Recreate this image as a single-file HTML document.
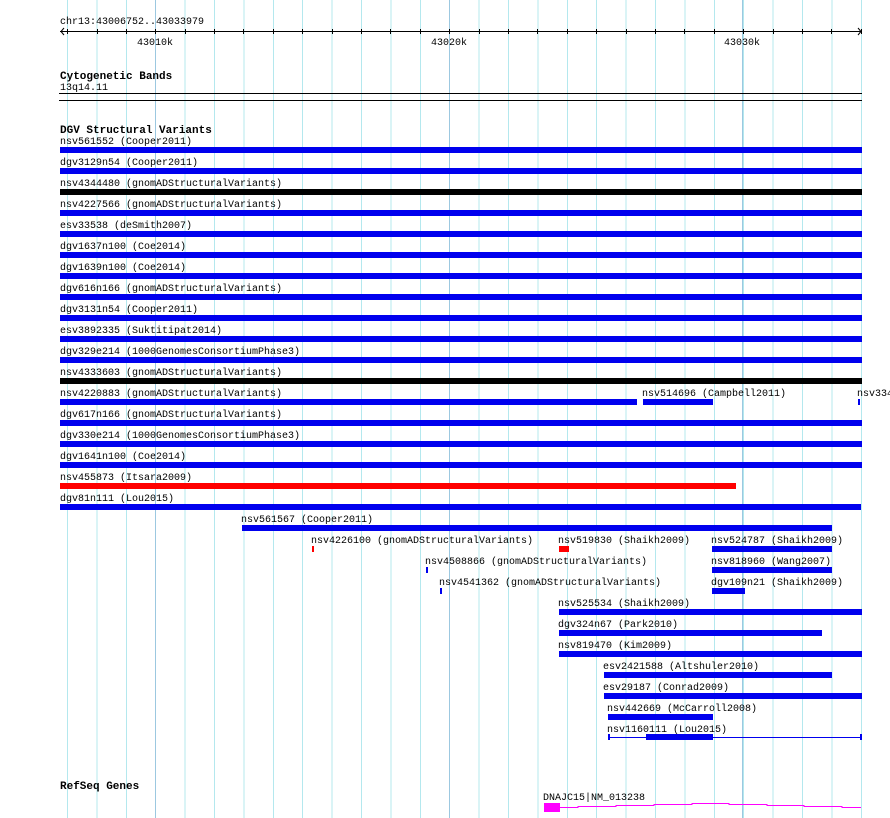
<!DOCTYPE html>
<html><head><meta charset="utf-8"><style>
body{margin:0;width:890px;height:818px;background:#fff;position:relative;overflow:hidden;font-family:"Liberation Mono","DejaVu Sans Mono",monospace;}
.g{position:absolute;left:67px;top:0;width:796px;height:818px;background-image:repeating-linear-gradient(to right,#b4e8ee 0,#b4e8ee 1px,transparent 1px,transparent 29.4px);}
.m{position:absolute;top:0;width:1px;height:818px;background:#9cc8e0}
.t{position:absolute;font-size:10px;line-height:12px;color:#000;white-space:pre;margin-top:3px}
.h{position:absolute;font-size:11px;line-height:12px;font-weight:bold;white-space:pre;margin-top:3px}
.b{position:absolute;height:6px;background:#0000ee}
.r{background:#f00}.k{background:#000}
.l{position:absolute;background:#000}
.tk{position:absolute;top:29px;width:1px;height:5px;background:#000}
</style></head><body>
<div class="g"></div>
<div class="m" style="left:155px"></div><div class="m" style="left:449px"></div><div class="m" style="left:742px"></div>
<div class="t" style="left:60px;top:14px">chr13:43006752..43033979</div>
<div class="l" style="left:60px;top:31px;width:802px;height:1px"></div>
<svg style="position:absolute;left:0;top:0" width="890" height="40"><polyline fill="none" stroke="#000" points="64,28 61,31.5 64,35"/><polyline fill="none" stroke="#000" points="858,28 861,31.5 858,35"/></svg>
<div class="tk" style="left:67px"></div><div class="tk" style="left:97px"></div><div class="tk" style="left:126px"></div><div class="tk" style="left:155px"></div><div class="tk" style="left:185px"></div><div class="tk" style="left:214px"></div><div class="tk" style="left:243px"></div><div class="tk" style="left:273px"></div><div class="tk" style="left:302px"></div><div class="tk" style="left:332px"></div><div class="tk" style="left:361px"></div><div class="tk" style="left:390px"></div><div class="tk" style="left:420px"></div><div class="tk" style="left:449px"></div><div class="tk" style="left:479px"></div><div class="tk" style="left:508px"></div><div class="tk" style="left:537px"></div><div class="tk" style="left:567px"></div><div class="tk" style="left:596px"></div><div class="tk" style="left:626px"></div><div class="tk" style="left:655px"></div><div class="tk" style="left:684px"></div><div class="tk" style="left:714px"></div><div class="tk" style="left:743px"></div><div class="tk" style="left:773px"></div><div class="tk" style="left:802px"></div><div class="tk" style="left:831px"></div><div class="tk" style="left:861px"></div>
<div class="t" style="left:137px;top:35px">43010k</div>
<div class="t" style="left:431px;top:35px">43020k</div>
<div class="t" style="left:724px;top:35px">43030k</div>
<div class="h" style="left:60px;top:68px">Cytogenetic Bands</div>
<div class="t" style="left:60px;top:80px">13q14.11</div>
<div class="l" style="left:59px;top:93px;width:803px;height:1px"></div>
<div class="l" style="left:59px;top:100px;width:803px;height:1px"></div>
<div class="h" style="left:60px;top:122px">DGV Structural Variants</div>

<div class="t" style="left:60px;top:134px">nsv561552 (Cooper2011)</div><div class="b" style="left:60px;top:147px;width:802px"></div>
<div class="t" style="left:60px;top:155px">dgv3129n54 (Cooper2011)</div><div class="b" style="left:60px;top:168px;width:802px"></div>
<div class="t" style="left:60px;top:176px">nsv4344480 (gnomADStructuralVariants)</div><div class="b k" style="left:60px;top:189px;width:802px"></div>
<div class="t" style="left:60px;top:197px">nsv4227566 (gnomADStructuralVariants)</div><div class="b" style="left:60px;top:210px;width:802px"></div>
<div class="t" style="left:60px;top:218px">esv33538 (deSmith2007)</div><div class="b" style="left:60px;top:231px;width:802px"></div>
<div class="t" style="left:60px;top:239px">dgv1637n100 (Coe2014)</div><div class="b" style="left:60px;top:252px;width:802px"></div>
<div class="t" style="left:60px;top:260px">dgv1639n100 (Coe2014)</div><div class="b" style="left:60px;top:273px;width:802px"></div>
<div class="t" style="left:60px;top:281px">dgv616n166 (gnomADStructuralVariants)</div><div class="b" style="left:60px;top:294px;width:802px"></div>
<div class="t" style="left:60px;top:302px">dgv3131n54 (Cooper2011)</div><div class="b" style="left:60px;top:315px;width:802px"></div>
<div class="t" style="left:60px;top:323px">esv3892335 (Suktitipat2014)</div><div class="b" style="left:60px;top:336px;width:802px"></div>
<div class="t" style="left:60px;top:344px">dgv329e214 (1000GenomesConsortiumPhase3)</div><div class="b" style="left:60px;top:357px;width:802px"></div>
<div class="t" style="left:60px;top:365px">nsv4333603 (gnomADStructuralVariants)</div><div class="b k" style="left:60px;top:378px;width:802px"></div>
<div class="t" style="left:60px;top:386px">nsv4220883 (gnomADStructuralVariants)</div><div class="b" style="left:60px;top:399px;width:577px"></div>
<div class="t" style="left:642px;top:386px">nsv514696 (Campbell2011)</div><div class="b" style="left:643px;top:399px;width:70px"></div>
<div class="t" style="left:857px;top:386px">nsv334</div><div class="b" style="left:858px;top:399px;width:2px"></div>
<div class="t" style="left:60px;top:407px">dgv617n166 (gnomADStructuralVariants)</div><div class="b" style="left:60px;top:420px;width:802px"></div>
<div class="t" style="left:60px;top:428px">dgv330e214 (1000GenomesConsortiumPhase3)</div><div class="b" style="left:60px;top:441px;width:802px"></div>
<div class="t" style="left:60px;top:449px">dgv1641n100 (Coe2014)</div><div class="b" style="left:60px;top:462px;width:802px"></div>
<div class="t" style="left:60px;top:470px">nsv455873 (Itsara2009)</div><div class="b r" style="left:60px;top:483px;width:676px"></div>
<div class="t" style="left:60px;top:491px">dgv81n111 (Lou2015)</div><div class="b" style="left:60px;top:504px;width:801px"></div>

<div class="t" style="left:241px;top:512px">nsv561567 (Cooper2011)</div><div class="b" style="left:242px;top:525px;width:590px"></div>
<div class="t" style="left:311px;top:533px">nsv4226100 (gnomADStructuralVariants)</div><div class="b r" style="left:312px;top:546px;width:2px"></div>
<div class="t" style="left:558px;top:533px">nsv519830 (Shaikh2009)</div><div class="b r" style="left:559px;top:546px;width:10px"></div>
<div class="t" style="left:711px;top:533px">nsv524787 (Shaikh2009)</div><div class="b" style="left:712px;top:546px;width:120px"></div>
<div class="t" style="left:425px;top:554px">nsv4508866 (gnomADStructuralVariants)</div><div class="b" style="left:426px;top:567px;width:2px"></div>
<div class="t" style="left:711px;top:554px">nsv818960 (Wang2007)</div><div class="b" style="left:712px;top:567px;width:120px"></div>
<div class="t" style="left:439px;top:575px">nsv4541362 (gnomADStructuralVariants)</div><div class="b" style="left:440px;top:588px;width:2px"></div>
<div class="t" style="left:711px;top:575px">dgv109n21 (Shaikh2009)</div><div class="b" style="left:712px;top:588px;width:33px"></div>
<div class="t" style="left:558px;top:596px">nsv525534 (Shaikh2009)</div><div class="b" style="left:559px;top:609px;width:303px"></div>
<div class="t" style="left:558px;top:617px">dgv324n67 (Park2010)</div><div class="b" style="left:559px;top:630px;width:263px"></div>
<div class="t" style="left:558px;top:638px">nsv819470 (Kim2009)</div><div class="b" style="left:559px;top:651px;width:303px"></div>
<div class="t" style="left:603px;top:659px">esv2421588 (Altshuler2010)</div><div class="b" style="left:604px;top:672px;width:228px"></div>
<div class="t" style="left:603px;top:680px">esv29187 (Conrad2009)</div><div class="b" style="left:604px;top:693px;width:258px"></div>
<div class="t" style="left:607px;top:701px">nsv442669 (McCarroll2008)</div><div class="b" style="left:608px;top:714px;width:105px"></div>
<div class="t" style="left:607px;top:722px">nsv1160111 (Lou2015)</div>
<div class="b" style="left:608px;top:737px;width:253px;height:1px"></div>
<div class="b" style="left:608px;top:734px;width:2px;height:6px"></div>
<div class="b" style="left:860px;top:734px;width:2px;height:6px"></div>
<div class="b" style="left:646px;top:734px;width:67px"></div>

<div class="h" style="left:60px;top:778px">RefSeq Genes</div>
<div class="t" style="left:543px;top:790px">DNAJC15|NM_013238</div>
<div style="position:absolute;left:544px;top:803px;width:16px;height:9px;background:#f0f"></div>
<svg style="position:absolute;left:0;top:0" width="890" height="818"><polyline fill="none" stroke="#f0f" stroke-width="1" points="560,807.5 578,807.5 578,806.5 616,806.5 616,805.5 654,805.5 654,804.5 692,804.5 692,803.5 729,803.5 729,804.5 767,804.5 767,805.5 804,805.5 804,806.5 842,806.5 842,807.5 861,807.5"/></svg>
</body></html>
